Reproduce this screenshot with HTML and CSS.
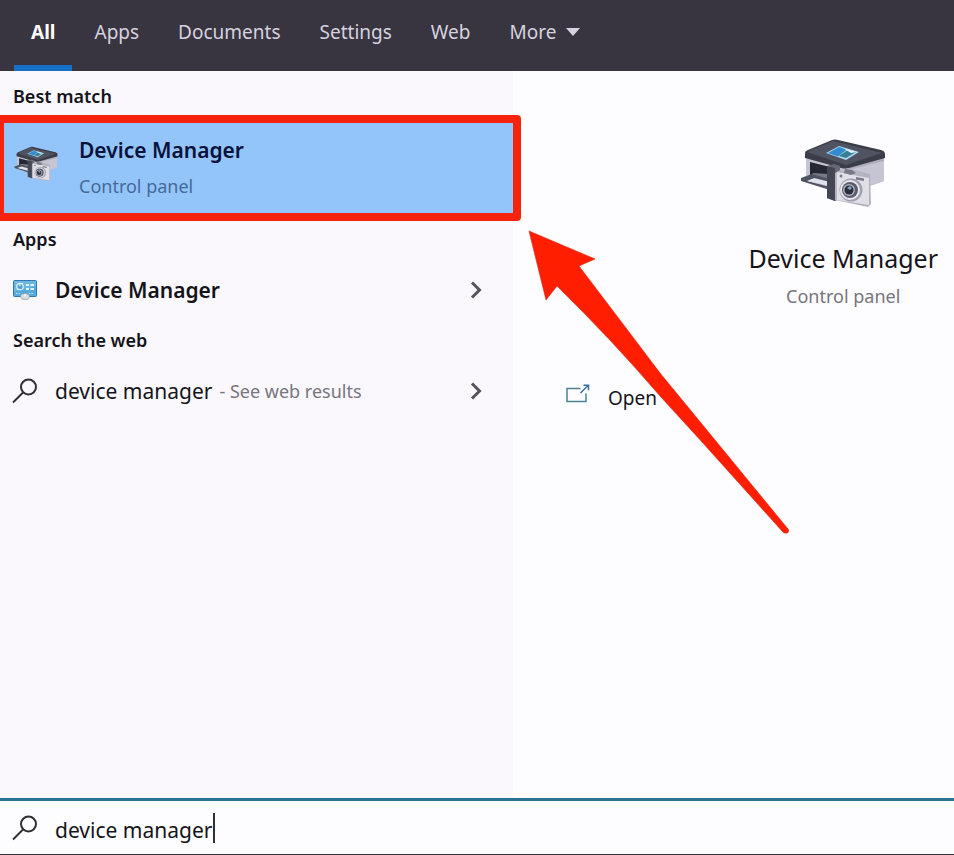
FILE: index.html
```html
<!DOCTYPE html>
<html lang="en">
<head>
    <meta charset="UTF-8">
    <meta name="viewport" content="width=device-width, initial-scale=1.0">
    <title>Search - device manager</title>
    <link rel="stylesheet" href="styles.css">
</head>
<body>

    <nav class="tabs">
        <button type="button" class="tab active">All</button>
        <button type="button" class="tab">Apps</button>
        <button type="button" class="tab">Documents</button>
        <button type="button" class="tab">Settings</button>
        <button type="button" class="tab">Web</button>
        <button type="button" class="tab more">More
            <svg width="14" height="8" viewBox="0 0 14 8"><path d="M0 0h14L7 8z" fill="currentColor"/></svg>
        </button>
    </nav>

    <main class="content">
        <section class="results">
            <h2 class="group-title">Best match</h2>
            <button type="button" class="best-match">
                <svg class="device-icon" viewBox="0 0 86 70"><use href="#device"/></svg>
                <span class="best-text">
                    <span class="best-name">Device Manager</span>
                    <span class="best-type">Control panel</span>
                </span>
            </button>

            <h2 class="group-title">Apps</h2>
            <button type="button" class="result">
                <svg class="result-icon" width="26" height="26" viewBox="0 0 26 26">
                    <rect x="1.500" y="3.500" width="23" height="16" rx="1" fill="#55a9dc" stroke="#3479ab"/>
                    <path d="M2 4h22v5L2 15z" fill="#80c5ec" opacity=".5"/>
                    <circle cx="8" cy="9.500" r="3.200" fill="#4b9ace" stroke="#d9f2ff" stroke-width="1.300"/>
                    <path d="M8 9.500V6.500h3" fill="none" stroke="#fff"/>
                    <path d="M14 8h3m1.500 0H22M14 12h3m1.500 0H22" stroke="#e2f6ff" stroke-width="2"/>
                    <path d="M4 16.500h5m8 0h5" stroke="#b9e2f8" stroke-dasharray="1.500 1"/>
                    <ellipse cx="13" cy="19.500" rx="4.500" ry="3" fill="#d5dce1" stroke="#8b9ba6" stroke-width=".7"/>
                    <path d="M13 17v2.500" stroke="#fff" stroke-width="1.500"/>
                </svg>
                <span class="result-name strong">Device Manager</span>
                <svg class="chevron" width="12" height="18" viewBox="0 0 12 18"><path d="M2 1.500L9.500 9 2 16.500"/></svg>
            </button>

            <h2 class="group-title">Search the web</h2>
            <button type="button" class="result">
                <svg class="result-icon search" width="26" height="26" viewBox="0 0 26 26"><use href="#glass"/></svg>
                <span class="result-name">device manager</span>
                <span class="result-note">- See web results</span>
                <svg class="chevron" width="12" height="18" viewBox="0 0 12 18"><path d="M2 1.500L9.500 9 2 16.500"/></svg>
            </button>
        </section>

        <section class="preview">
            <div class="preview-head">
                <svg class="preview-icon" viewBox="0 0 86 70"><use href="#device"/></svg>
                <h1 class="preview-title">Device Manager</h1>
                <p class="preview-type">Control panel</p>
            </div>
            <button type="button" class="open">
                <svg width="24" height="20" viewBox="0 0 24 20" fill="none" stroke-width="1.500">
                    <path d="M14.500 4.500H1v13h19V9.500" stroke="#4b8295"/>
                    <path d="M14.500 9L22 1.500M17.500 1.200h5v5" stroke="#3d6bab"/>
                </svg>
                Open
            </button>
        </section>
    </main>

    <label class="search-box">
        <svg class="result-icon search" width="26" height="26" viewBox="0 0 26 26"><use href="#glass"/></svg>
        <input type="text" class="search-input" value="device manager" aria-label="Search">
        <span class="caret"></span>
    </label>

    <!-- Red arrow pointing at the best match -->
    <svg class="arrow" width="264" height="306" viewBox="0 0 264 306">
        <path d="M1 1L67 29 51 36Q95 94 132 143L187 210 260 299Q262 302 259 303 256 304 254 301L174 212 132 166Q84 110 29 56L18 70z" fill="#ff1e00" stroke="#d92815" stroke-width=".6"/>
    </svg>

    <!-- Shared drawings -->
    <svg class="defs">
        <symbol id="device" viewBox="0 0 86 70">
            <path d="M6 20l38 9v26L6 42z" fill="#c6c5d1"/>
            <path d="M44 29l40-10v24L46 56z" fill="#adadbc"/>
            <path d="M44 33l40-10v20L46 56z" fill="#c6c5d3"/>
            <path d="M5 15Q5 13 8 12L32 2q3-1 6 0l43 10q4 1 4 4v4L49 30q-4 1-8 0L5 20z" fill="#3b3d49"/>
            <path d="M7 14L33 3l49 12-36 12z" fill="#505362"/>
            <path d="M26 15l13-7 20 6-13 8z" fill="#a8d7f2"/>
            <path d="M28 15l11-6 8 2.500-9 7z" fill="#338bd0"/>
            <path d="M39 18l9-6 8 2-10 6z" fill="#387d91"/>
            <path d="M43 10l14 4-6 1z" fill="#e3f4ff"/>
            <path d="M10 24l20 5v17l-20-6z" fill="#252735"/>
            <path d="M13 35l16 1v8l-18-5z" fill="#777986"/>
            <path d="M1 40l11-4 18 5v3l-16-4-7 3 23 6v3L1 43z" fill="#505361"/>
            <path d="M8 43l6-3 16 4v4z" fill="#e2e2ec"/>
            <path d="M27 28l7-2 6 2v33l-5 2-8-3z" fill="#666975"/>
            <path d="M27 28l8 2v33l-8-3z" fill="#444753"/>
            <path d="M35 35l5-3 5 1 2-3 23 6 1 30-3 3-33-7z" fill="#b4b3bf"/>
            <path d="M37 34l32 6v27l-32-5z" fill="#e0dfe8"/>
            <path d="M45 31l7 1 4 3-5 2-7-2zM56 39l8 1.500v2.500l-8-1.500z" fill="#777987"/>
            <circle cx="41" cy="38" r="1.500" fill="#777987"/>
            <circle cx="51" cy="52" r="11.500" fill="#a1a0ad"/>
            <circle cx="50" cy="52" r="10" fill="#e8e7ef"/>
            <circle cx="50" cy="52" r="8" fill="#595b68"/>
            <circle cx="49" cy="52" r="6" fill="#aaaebb"/>
            <circle cx="49" cy="52" r="4.500" fill="#292d3b"/>
            <path d="M47 50l3-2 2 2-2 2z" fill="#899fb7"/>
        </symbol>
        <symbol id="glass" viewBox="0 0 26 26">
            <circle cx="16.500" cy="9" r="7.500"/>
            <path d="M11 14.500L1 24.500"/>
        </symbol>
    </svg>

</body>
</html>
```

FILE: styles.css
```css
* {
    box-sizing: border-box;
}

body {
    font-family: "Noto Sans", "Open Sans", sans-serif;
    margin: 0;
    min-height: 100vh;
    display: flex;
    flex-direction: column;
    position: relative;
    background-color: #fdfcfe;
    color: #15141a;
}

button,
input {
    font-family: inherit;
    color: inherit;
    background: none;
    border: 0;
    margin: 0;
    padding: 0;
}

button {
    text-align: left;
}

/* Top tabs */
.tabs {
    display: flex;
    gap: 5px;
    height: 71px;
    padding-left: 14px;
    background-color: #383440;
}

.tab {
    padding: 0 17px 2px;
    border-bottom: 6px solid transparent;
    font-size: 19px;
    color: #d6d2df;
}

.tab.active {
    font-weight: 700;
    color: #fff;
    border-bottom-color: #1670c8;
}

.more {
    display: flex;
    align-items: center;
    gap: 10px;
}

.content {
    flex: 1;
    display: flex;
}

/* Left column */
.results {
    flex: 0 0 513px;
    background-color: #faf8fd;
}

.group-title {
    margin: 0;
    padding-left: 13px;
    font-size: 18px;
    font-weight: 600;
    line-height: 51px;
}

.best-match {
    position: relative;
    display: flex;
    align-items: center;
    gap: 21px;
    width: 100%;
    height: 92px;
    padding-left: 14px;
    background-color: #94c5fa;
}

/* Red frame around the best match */
.best-match::after {
    content: "";
    position: absolute;
    inset: -7px -8px -7px -4px;
    border: 8px solid #f6240c;
    border-radius: 4px;
}

.device-icon {
    width: 44px;
    height: 36px;
    margin-bottom: 8px;
}

.best-text {
    display: flex;
    flex-direction: column;
}

.best-name {
    font-size: 21px;
    font-weight: 600;
    line-height: 36px;
    color: #07123a;
}

.best-type {
    font-size: 18px;
    line-height: 36px;
    color: #456a99;
}

.result {
    display: flex;
    align-items: center;
    width: 100%;
    height: 50px;
    padding: 0 31px 0 12px;
}

.result-icon {
    flex: none;
    margin-right: 17px;
}

.search {
    fill: none;
    stroke: #302f36;
    stroke-width: 2;
}

.result-name {
    font-size: 21px;
}

.strong {
    font-weight: 600;
}

.result-note {
    margin-left: 7px;
    font-size: 18px;
    color: #77757d;
}

.chevron {
    margin-left: auto;
    fill: none;
    stroke: #55535b;
    stroke-width: 3;
}

/* Right column */
.preview {
    flex: 1;
    display: flex;
    flex-direction: column;
    align-items: flex-start;
    padding: 67px 16px 0 53px;
}

.preview-head {
    align-self: flex-end;
    text-align: center;
}

.preview-icon {
    display: block;
    width: 86px;
    height: 70px;
    margin: 0 auto;
}

.preview-title {
    margin: 30px 0 0;
    font-size: 25px;
    font-weight: 400;
    line-height: 40px;
}

.preview-type {
    margin: 0;
    font-size: 18px;
    line-height: 36px;
    color: #77757d;
}

.open {
    display: flex;
    align-items: center;
    gap: 18px;
    margin-top: 66px;
    font-size: 19px;
    line-height: 36px;
}

.open svg {
    margin-bottom: 8px;
}

/* Bottom search box */
.search-box {
    display: flex;
    align-items: center;
    height: 57px;
    padding-left: 12px;
    border-top: 3px solid #2c7391;
    border-bottom: 1px solid #323137;
}

.search-input {
    width: 158px;
    height: 36px;
    padding-top: 4px;
    font-size: 21px;
    outline: none;
}

.caret {
    width: 2px;
    height: 30px;
    background-color: #302f36;
}

.arrow {
    position: absolute;
    top: 230px;
    left: 528px;
}

.defs {
    position: absolute;
    width: 0;
    height: 0;
}
```
